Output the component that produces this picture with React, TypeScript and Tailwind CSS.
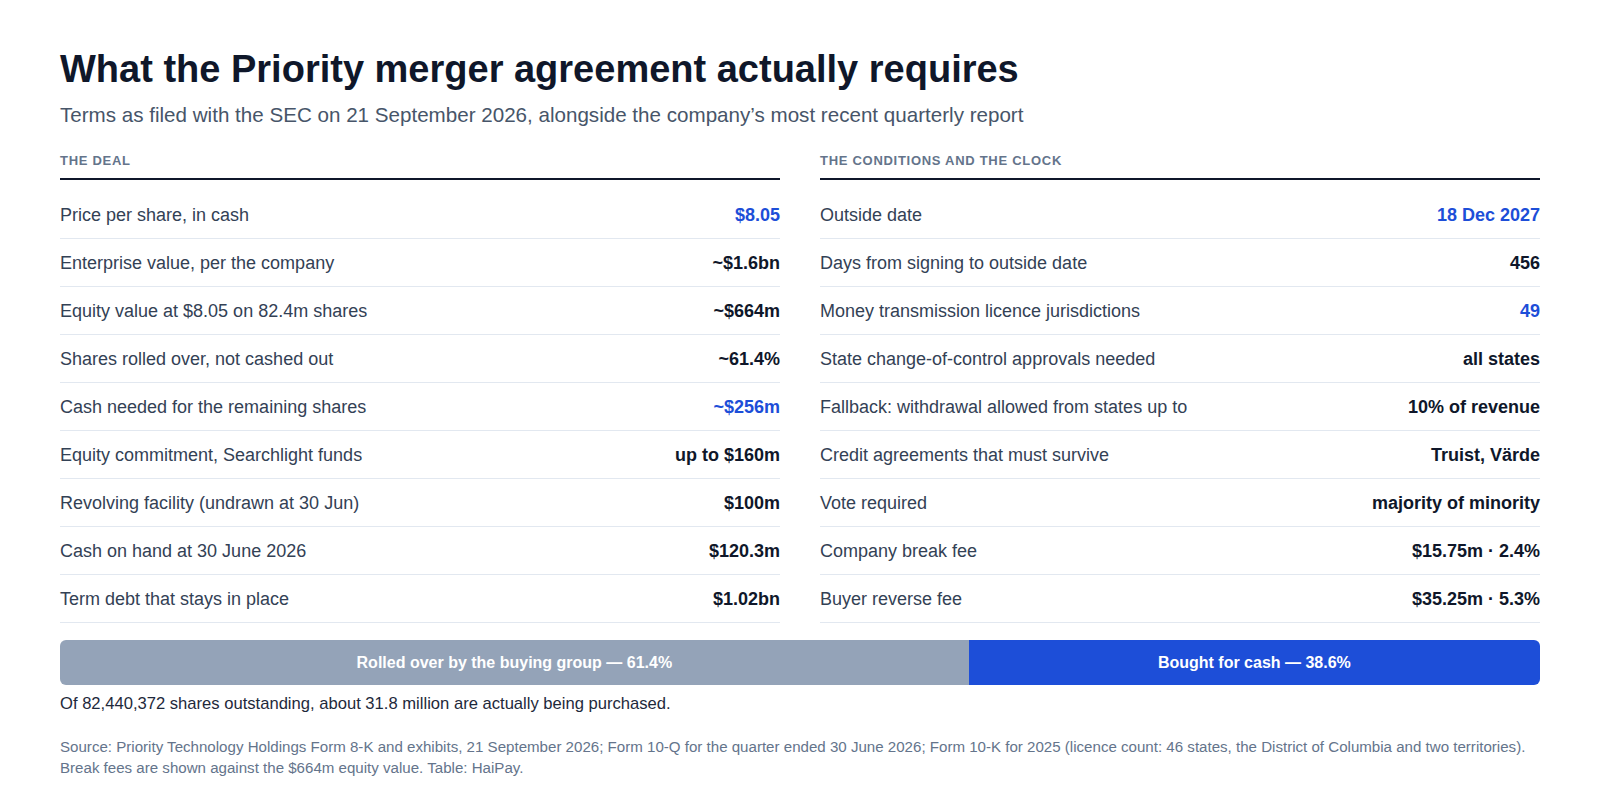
type Row = { label: string; value: string; blue?: boolean };

const deal: Row[] = [
  { label: "Price per share, in cash", value: "$8.05", blue: true },
  { label: "Enterprise value, per the company", value: "~$1.6bn" },
  { label: "Equity value at $8.05 on 82.4m shares", value: "~$664m" },
  { label: "Shares rolled over, not cashed out", value: "~61.4%" },
  { label: "Cash needed for the remaining shares", value: "~$256m", blue: true },
  { label: "Equity commitment, Searchlight funds", value: "up to $160m" },
  { label: "Revolving facility (undrawn at 30 Jun)", value: "$100m" },
  { label: "Cash on hand at 30 June 2026", value: "$120.3m" },
  { label: "Term debt that stays in place", value: "$1.02bn" },
];

const clock: Row[] = [
  { label: "Outside date", value: "18 Dec 2027", blue: true },
  { label: "Days from signing to outside date", value: "456" },
  { label: "Money transmission licence jurisdictions", value: "49", blue: true },
  { label: "State change-of-control approvals needed", value: "all states" },
  { label: "Fallback: withdrawal allowed from states up to", value: "10% of revenue" },
  { label: "Credit agreements that must survive", value: "Truist, Värde" },
  { label: "Vote required", value: "majority of minority" },
  { label: "Company break fee", value: "$15.75m · 2.4%" },
  { label: "Buyer reverse fee", value: "$35.25m · 5.3%" },
];

function Table({ title, rows }: { title: string; rows: Row[] }) {
  return (
    <div>
      <div className="border-b-2 border-[#0f172a] pb-[9px] text-[13px] font-bold uppercase leading-4 tracking-[0.055em] text-[#64748b]">
        {title}
      </div>
      <div className="mt-[11px]">
        {rows.map((r) => (
          <div
            key={r.label}
            className="flex h-12 items-center justify-between border-b border-[#e2e8f0] pt-[2px] text-[18px]"
          >
            <span className="text-[#334155]">{r.label}</span>
            <span className={r.blue ? "font-bold text-[#1d4ed8]" : "font-bold text-[#0f172a]"}>
              {r.value}
            </span>
          </div>
        ))}
      </div>
    </div>
  );
}

export default function App() {
  return (
    <div className="min-h-screen bg-white" style={{ fontFamily: '"Liberation Sans", Arial, sans-serif' }}>
      <div className="mx-auto max-w-[1480px] pt-[45px]">
        <h1 className="text-[38px] font-bold leading-[48px] text-[#0f172a]">
          What the Priority merger agreement actually requires
        </h1>
        <p className="mt-[8px] text-[20.6px] leading-[28px] text-[#475569]">
          Terms as filed with the SEC on 21 September 2026, alongside the company’s most recent quarterly report
        </p>

        <div className="mt-[24px] grid grid-cols-2 gap-10">
          <Table title="The deal" rows={deal} />
          <Table title="The conditions and the clock" rows={clock} />
        </div>

        <div className="mt-[17px] flex h-[45px] overflow-hidden rounded-md text-[16px] font-bold text-white">
          <div className="flex w-[61.4%] items-center justify-center bg-[#94a3b8]">
            Rolled over by the buying group — 61.4%
          </div>
          <div className="flex flex-1 items-center justify-center bg-[#1d4ed8]">
            Bought for cash — 38.6%
          </div>
        </div>
        <p className="mt-[7px] text-[16.6px] leading-[24px] text-[#1e293b]">
          Of 82,440,372 shares outstanding, about 31.8 million are actually being purchased.
        </p>

        <p className="mt-[20px] text-[15.1px] leading-[21px] text-[#64748b]">
          Source: Priority Technology Holdings Form 8-K and exhibits, 21 September 2026; Form 10-Q for the quarter ended 30 June 2026; Form 10-K for 2025 (licence count: 46 states, the District of Columbia and two territories).
          <br />
          Break fees are shown against the $664m equity value. Table: HaiPay.
        </p>
      </div>
    </div>
  );
}
